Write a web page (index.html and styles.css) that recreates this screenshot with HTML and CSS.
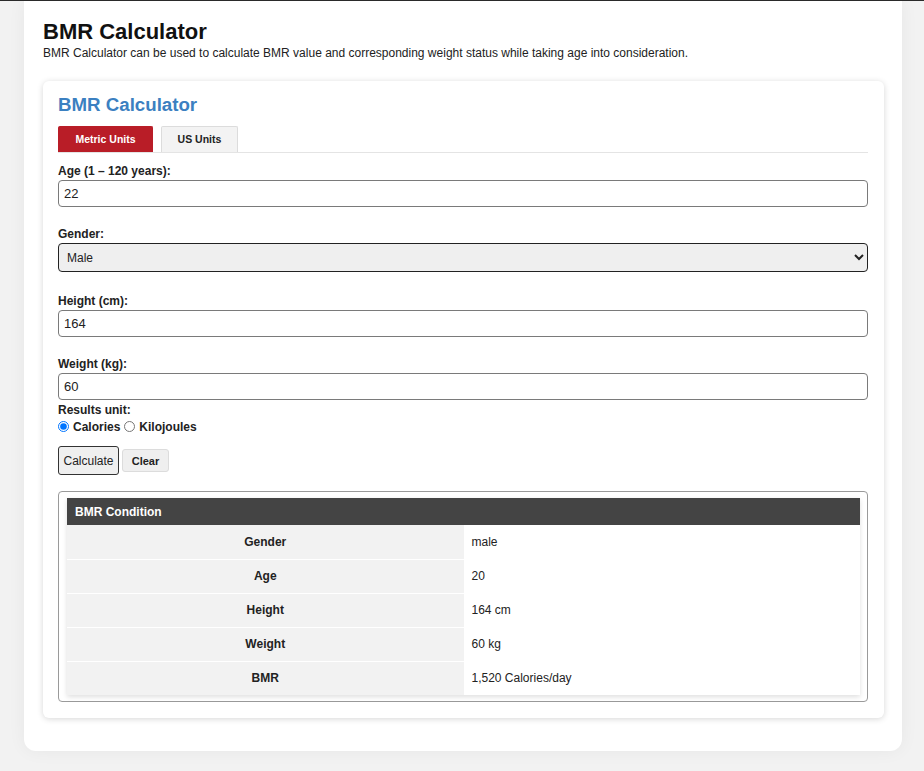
FILE: index.html
```html
<!DOCTYPE html>
<html lang="en">
<head>
<meta charset="utf-8">
<title>BMR Calculator</title>
<link rel="stylesheet" href="styles.css">
</head>
<body>
<div class="page">
  <h1 class="page-title">BMR Calculator</h1>
  <p class="desc">BMR Calculator can be used to calculate BMR value and corresponding weight status while taking age into consideration.</p>

  <div class="card">
    <h2 class="card-title">BMR Calculator</h2>
    <div class="tabs">
      <button class="tab tab-active" type="button">Metric Units</button>
      <button class="tab" type="button">US Units</button>
    </div>

    <form class="form">
      <div class="group">
        <label class="label" for="age">Age (1 – 120 years):</label>
        <input class="field" id="age" type="text" value="22">
      </div>
      <div class="group group-select">
        <label class="label" for="gender">Gender:</label>
        <select class="select" id="gender">
          <option>Male</option>
          <option>Female</option>
        </select>
      </div>
      <div class="group">
        <label class="label" for="height">Height (cm):</label>
        <input class="field" id="height" type="text" value="164">
      </div>
      <div class="group group-last">
        <label class="label" for="weight">Weight (kg):</label>
        <input class="field" id="weight" type="text" value="60">
      </div>

      <div class="units">
        <div class="label">Results unit:</div>
        <div class="radios">
          <label class="radio"><input type="radio" name="unit" checked> Calories</label>
          <label class="radio"><input type="radio" name="unit"> Kilojoules</label>
        </div>
      </div>

      <div class="actions">
        <button class="btn btn-primary" type="button">Calculate</button>
        <button class="btn btn-clear" type="button">Clear</button>
      </div>
    </form>

    <div class="result">
      <table class="result-table">
        <thead>
          <tr><th colspan="2">BMR Condition</th></tr>
        </thead>
        <tbody>
          <tr><td class="key">Gender</td><td class="val">male</td></tr>
          <tr><td class="key">Age</td><td class="val">20</td></tr>
          <tr><td class="key">Height</td><td class="val">164 cm</td></tr>
          <tr><td class="key">Weight</td><td class="val">60 kg</td></tr>
          <tr><td class="key">BMR</td><td class="val">1,520 Calories/day</td></tr>
        </tbody>
      </table>
    </div>
  </div>
</div>
</body>
</html>
```

FILE: styles.css
```css
* { box-sizing: border-box; }

html, body {
  margin: 0;
  padding: 0;
}

body {
  background: #f2f2f2;
  border-top: 1px solid #2a2a2a;
  font-family: "Liberation Sans", Arial, sans-serif;
  color: #222;
  min-height: 771px;
}

.page {
  margin: 0 22px 0 24px;
  background: #fff;
  padding: 18px 18px 33px 19px;
  border-radius: 0 0 12px 12px;
  box-shadow: 0 0 18px rgba(0, 0, 0, 0.05);
}

.page-title {
  margin: 0;
  font-size: 22px;
  line-height: 25px;
  font-weight: bold;
  color: #111;
}

.desc {
  margin: 2px 0 0;
  font-size: 12px;
  line-height: 14px;
  color: #222;
}

.card {
  margin-top: 21px;
  background: #fff;
  border-radius: 6px;
  padding: 13px 16px 16px 15px;
  box-shadow: 0 1px 6px rgba(0, 0, 0, 0.16);
}

.card-title {
  margin: 0;
  font-size: 18.7px;
  line-height: 22px;
  font-weight: bold;
  color: #3b80c1;
}

.tabs {
  margin-top: 10px;
  display: flex;
  gap: 8px;
  border-bottom: 1px solid #e4e4e4;
}

.tab {
  height: 26px;
  width: 77px;
  padding: 0 0 2px;
  font-family: "Liberation Sans", Arial, sans-serif;
  font-size: 10.5px;
  font-weight: bold;
  color: #222;
  background: #f3f3f3;
  border: 1px solid #dcdcdc;
  border-bottom: none;
  border-radius: 2px 2px 0 0;
}

.tab-active {
  width: 95px;
  background: #b91d27;
  border-color: #b91d27;
  color: #fff;
}

.form {
  margin-top: 11px;
}

.group {
  margin-bottom: 20px;
}

.group-select {
  margin-bottom: 22px;
}

.group-last {
  margin-bottom: 3px;
}

.label {
  display: block;
  font-size: 12px;
  line-height: 14px;
  font-weight: bold;
  color: #222;
  margin-bottom: 2px;
}

.field {
  display: block;
  width: 100%;
  height: 27px;
  padding: 0 5px;
  font-family: "Liberation Sans", Arial, sans-serif;
  font-size: 13px;
  color: #222;
  border: 1px solid #7a7a7a;
  border-radius: 4px;
  background: #fff;
}

.select {
  display: block;
  width: 100%;
  height: 29px;
  padding: 0 4px;
  font-family: "Liberation Sans", Arial, sans-serif;
  font-size: 12px;
  color: #222;
  background: #efefef;
  border: 1px solid #222;
  border-radius: 4px;
}

.units .label {
  margin-bottom: 0;
}

.radios {
  display: flex;
  align-items: center;
  height: 19px;
  gap: 4px;
}

.radio {
  display: flex;
  align-items: center;
  font-size: 12px;
  font-weight: bold;
  color: #222;
}

.radio input {
  margin: 0 4px 0 0;
  width: 11px;
  height: 11px;
}

.actions {
  margin-top: 10px;
  display: flex;
  align-items: center;
  gap: 3px;
}

.btn {
  font-family: "Liberation Sans", Arial, sans-serif;
  color: #222;
  background: #efefef;
  border-radius: 3px;
}

.btn-primary {
  height: 29px;
  width: 61px;
  padding: 0;
  font-size: 12px;
  border: 1px solid #333;
}

.btn-clear {
  height: 23px;
  width: 47px;
  padding: 0;
  font-size: 11px;
  font-weight: bold;
  border: 1px solid #dcdcdc;
}

.result {
  margin-top: 16px;
  border: 1px solid #9a9a9a;
  border-radius: 4px;
  padding: 6px 7px 6px 8px;
}

.result-table {
  width: 100%;
  border-collapse: collapse;
  box-shadow: 0 2px 5px rgba(0, 0, 0, 0.13);
  font-size: 12px;
}

.result-table th {
  height: 27px;
  background: #444;
  color: #fff;
  text-align: left;
  font-weight: bold;
  padding: 0 8px;
}

.result-table td {
  height: 34px;
  padding: 0 8px;
  border-top: 1px solid #fff;
}

.result-table tbody tr:first-child td {
  border-top: none;
}

.key {
  width: 50%;
  background: #f2f2f2;
  text-align: center;
  font-weight: bold;
  color: #222;
}

.val {
  background: #fff;
  color: #222;
}
```
